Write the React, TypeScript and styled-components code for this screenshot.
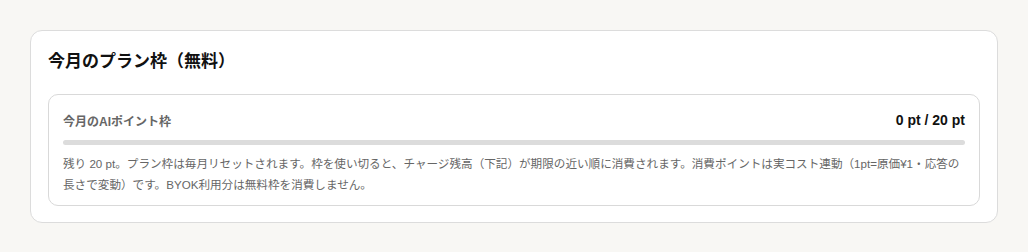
import styled, { createGlobalStyle } from 'styled-components';

const GlobalStyle = createGlobalStyle`
  body {
    margin: 0;
    background: #f8f7f4;
    font-family: "Liberation Sans", "Noto Sans CJK JP", sans-serif;
    color: #1a1a1a;
  }
`;

const Page = styled.div`
  padding: 30px;
`;

const Card = styled.section`
  background: #ffffff;
  border: 1px solid #dcdcdc;
  border-radius: 12px;
  padding: 17px 17px 16px;
`;

const Title = styled.h2`
  margin: 0 0 18px;
  font-size: 17px;
  font-weight: 700;
  line-height: 28px;
  color: #111;
`;

const QuotaBox = styled.div`
  border: 1px solid #d9d9d9;
  border-radius: 10px;
  padding: 13px 14px 10px;
`;

const QuotaHead = styled.div`
  display: flex;
  justify-content: space-between;
  align-items: center;
  height: 24px;
`;

const Label = styled.span`
  font-size: 12px;
  font-weight: 700;
  color: #666;
`;

const Amount = styled.span`
  font-size: 14px;
  font-weight: 700;
  color: #111;
`;

const Track = styled.div`
  margin-top: 8px;
  height: 5px;
  border-radius: 3px;
  background: #dcdcdc;
  overflow: hidden;
`;

const Fill = styled.div`
  height: 100%;
  background: #333;
`;

const Note = styled.p`
  margin: 8px 0 0;
  font-size: 11.6px;
  line-height: 21px;
  color: #666;
`;

export default function App() {
  const used = 0;
  const total = 20;
  return (
    <>
      <GlobalStyle />
      <Page>
        <Card>
          <Title>今月のプラン枠（無料）</Title>
          <QuotaBox>
            <QuotaHead>
              <Label>今月のAIポイント枠</Label>
              <Amount>{used} pt / {total} pt</Amount>
            </QuotaHead>
            <Track>
              <Fill style={{ width: `${(used / total) * 100}%` }} />
            </Track>
            <Note>
              残り {total - used} pt。プラン枠は毎月リセットされます。枠を使い切ると、チャージ残高（下記）が期限の近い順に消費されます。消費ポイントは実コスト連動（1pt=原価¥1・応答の長さで変動）です。BYOK利用分は無料枠を消費しません。
            </Note>
          </QuotaBox>
        </Card>
      </Page>
    </>
  );
}
